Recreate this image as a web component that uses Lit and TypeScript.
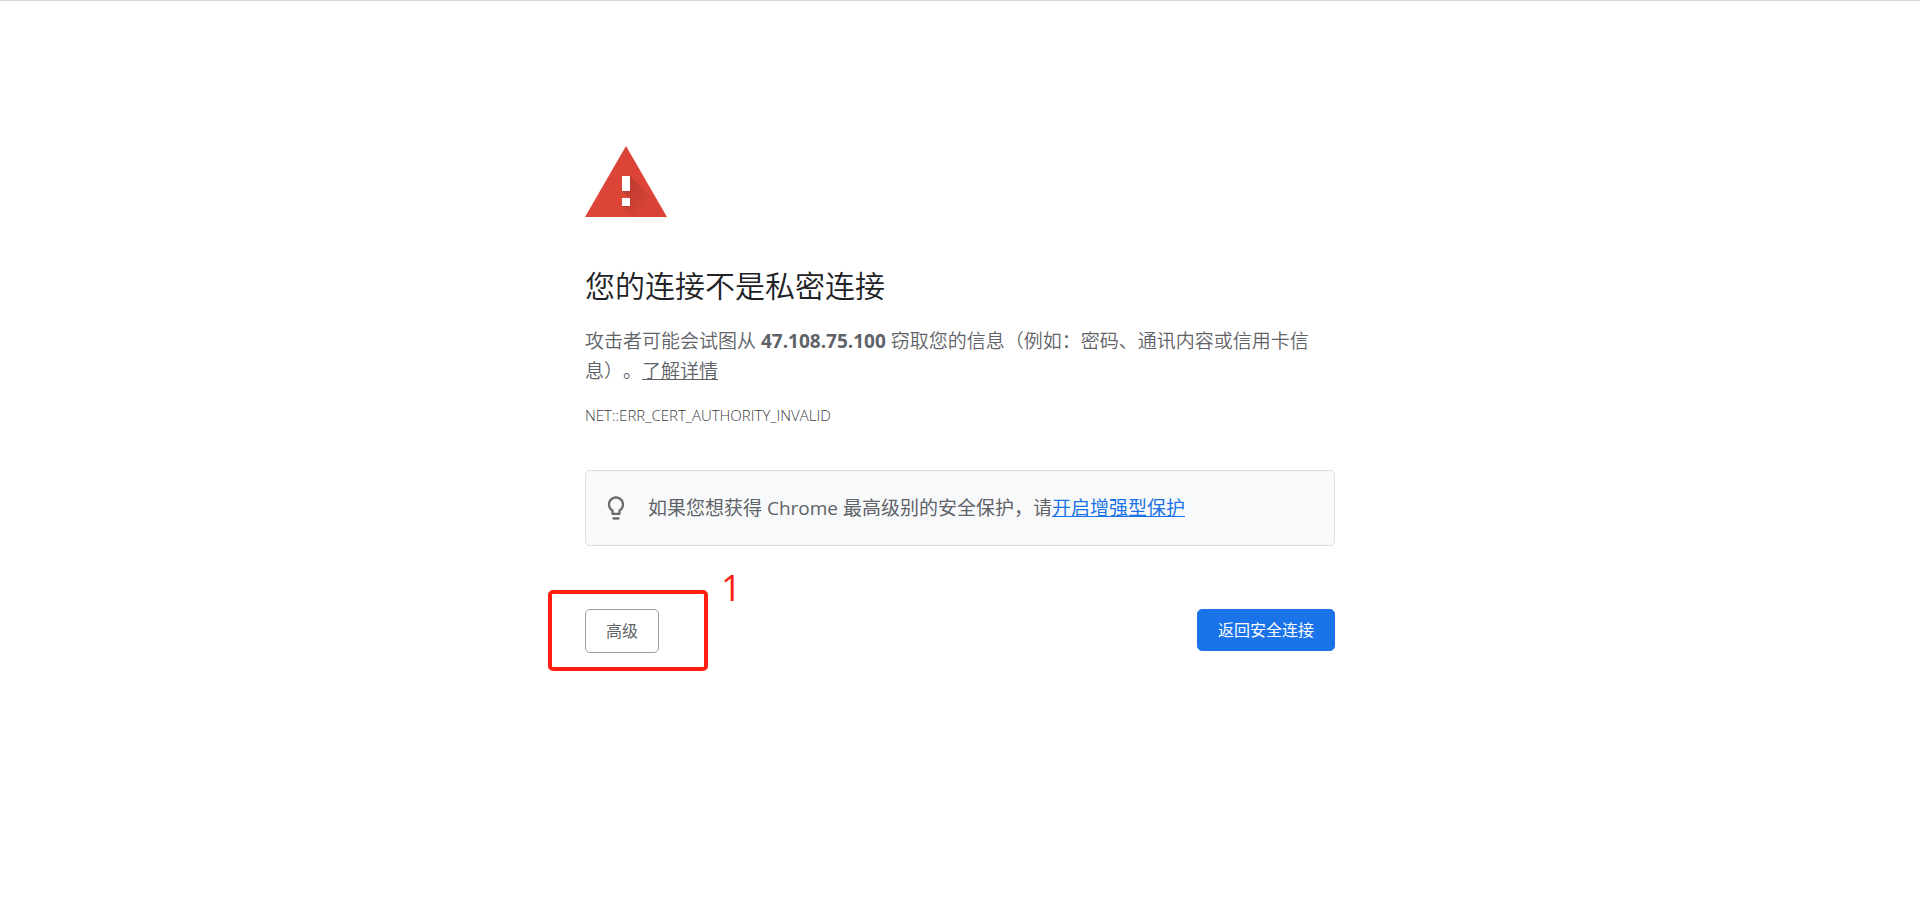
import { LitElement, html, css } from "lit";
import { customElement } from "lit/decorators.js";

@customElement("app-root")
export class AppRoot extends LitElement {
  static styles = css`
    :host {
      display: block;
      box-sizing: border-box;
      min-height: 100vh;
      border-top: 1px solid #dadada;
      background: #fff;
      color: #5f6368;
      font-family: "Open Sans", "Noto Sans CJK SC", sans-serif;
      font-size: 19px;
      font-weight: 400;
      line-height: 30px;
      text-spacing-trim: space-all;
    }
    .interstitial {
      box-sizing: border-box;
      width: 100%;
      max-width: 750px;
      margin: 0 auto;
      padding-top: 145px;
    }
    .warning {
      display: block;
      width: 82px;
      height: 71px;
    }
    .title {
      margin: 51px 0 22px;
      color: #202124;
      font-size: 30px;
      font-weight: 350;
      line-height: 36px;
    }
    .message {
      margin: 0;
      font-weight: 350;
    }
    .host {
      font-weight: 700;
    }
    .learn {
      color: inherit;
    }
    .code {
      margin: 19px 0 45px;
      font-size: 15px;
      font-weight: 300;
      line-height: 20px;
      color: #3c4043;
    }
    .promo {
      display: flex;
      align-items: center;
      gap: 18px;
      padding: 22px 16px;
      border: 1px solid #dadce0;
      border-radius: 5px;
      background: #f8f9fb;
    }
    .bulb {
      flex: none;
      width: 28px;
      height: 28px;
    }
    .promo p {
      margin: 0;
    }
    .promo a {
      color: #1a73e8;
    }
    .actions {
      display: flex;
      justify-content: space-between;
      align-items: flex-start;
      margin-top: 63px;
    }
    .marked {
      position: relative;
      display: flex;
    }
    button {
      box-sizing: border-box;
      margin: 0;
      padding: 9px 20px;
      border: 1px solid #9aa0a6;
      border-radius: 5px;
      background: #fff;
      color: #5f6368;
      font-family: inherit;
      font-size: 16px;
      font-weight: 400;
      line-height: 24px;
      cursor: pointer;
    }
    .primary {
      padding: 8px 20px;
      border-color: #1a73e8;
      background: #1a73e8;
      color: #fff;
    }
    .frame {
      position: absolute;
      inset: -19px -49px -18px -37px;
      border: 4px solid #ff1e0f;
      border-radius: 5px;
      pointer-events: none;
    }
    .step {
      position: absolute;
      left: 100%;
      bottom: 100%;
      margin: 0 0 0 62px;
      color: #ff1e0f;
      font-size: 36px;
      font-weight: 400;
      line-height: 42px;
    }
  `;

  render() {
    return html`
      <main class="interstitial">
        <svg class="warning" viewBox="0 0 82 71" aria-hidden="true">
          <defs>
            <linearGradient id="shade" gradientUnits="userSpaceOnUse" x1="40" y1="38" x2="62" y2="60">
              <stop offset="0" stop-color="#000" stop-opacity=".15" />
              <stop offset="1" stop-color="#000" stop-opacity=".02" />
            </linearGradient>
          </defs>
          <path fill="#db4437" d="M41 0 82 71H0Z" />
          <path fill="url(#shade)" d="M45 30 70 55 79 71H48L37 60H45V52L37 45H45Z" />
          <path fill="#fff" d="M37 30h8v15h-8zM37 52h8v8h-8z" />
        </svg>
        <h1 class="title">您的连接不是私密连接</h1>
        <p class="message">
          攻击者可能会试图从 <strong class="host">47.108.75.100</strong> 窃取您的信息（例如：密码、通讯内容或信用卡信息）。<a class="learn" href="#">了解详情</a>
        </p>
        <p class="code">NET::ERR_CERT_AUTHORITY_INVALID</p>
        <section class="promo">
          <svg class="bulb" viewBox="0 0 24 24" aria-hidden="true">
            <path
              fill="#6b6b6b"
              d="M9 21c0 .5.4 1 1 1h4c.6 0 1-.5 1-1v-1H9v1zm3-19C8.100 2 5 5.100 5 9c0 2.400 1.200 4.500 3 5.700V17c0 .5.4 1 1 1h6c.6 0 1-.5 1-1v-2.300c1.800-1.300 3-3.400 3-5.700 0-3.900-3.100-7-7-7zm2.900 11.100l-.9.6V16h-4v-2.300l-.9-.6C7.800 12.200 7 10.600 7 9c0-2.800 2.200-5 5-5s5 2.200 5 5c0 1.600-.8 3.200-2.100 4.100z"
            />
          </svg>
          <p>如果您想获得 Chrome 最高级别的安全保护，请<a href="#">开启增强型保护</a></p>
        </section>
        <div class="actions">
          <div class="marked">
            <button type="button">高级</button>
            <span class="frame"></span>
            <span class="step">1</span>
          </div>
          <button class="primary" type="button">返回安全连接</button>
        </div>
      </main>
    `;
  }
}
